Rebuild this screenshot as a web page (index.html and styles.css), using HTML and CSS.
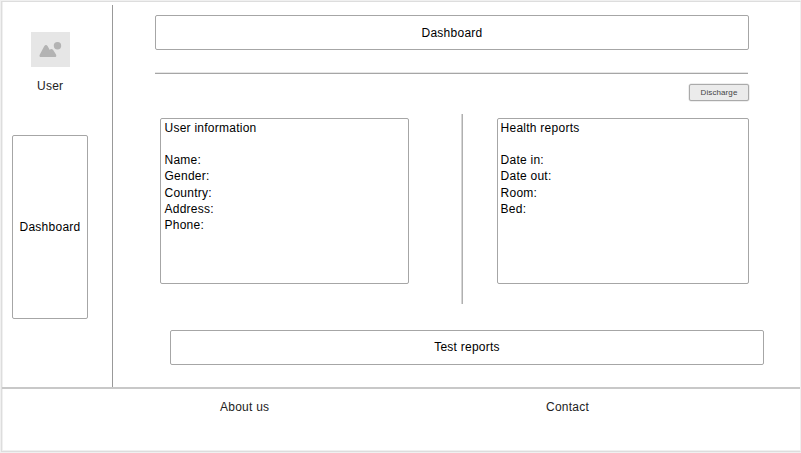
FILE: index.html
```html
<!DOCTYPE html>
<html lang="en">
<head>
<meta charset="utf-8">
<title>Dashboard</title>
<link rel="stylesheet" href="styles.css">
</head>
<body>
<div class="frame">
  <div class="body">
    <aside class="sidebar">
      <svg class="avatar" width="39" height="35" viewBox="0 0 39 35">
        <rect width="39" height="35" fill="#e6e6e6"/>
        <path d="M8.7 22.7L13.2 14.3Q15 11.9 16.7 14.3L18.8 18L19.4 17.3Q20.7 16.4 22 17.8L25 22.5Q26 25 23.6 25.1H10.2Q7.8 25 8.7 22.7Z" fill="#b3b3b3"/>
        <circle cx="26.5" cy="13.8" r="3.7" fill="#b3b3b3"/>
      </svg>
      <div class="user">User</div>
      <nav class="box nav">Dashboard</nav>
    </aside>
    <main class="main">
      <header class="box title">Dashboard</header>
      <hr class="rule">
      <button class="discharge" type="button">Discharge</button>
      <div class="panels">
        <section class="box panel panel-user">
          <h2>User information</h2>
          <p>Name:</p><p>Gender:</p><p>Country:</p><p>Address:</p><p>Phone:</p>
        </section>
        <div class="divider"></div>
        <section class="box panel panel-health">
          <h2>Health reports</h2>
          <p>Date in:</p><p>Date out:</p><p>Room:</p><p>Bed:</p>
        </section>
      </div>
      <div class="box tests">Test reports</div>
    </main>
  </div>
  <footer class="footer"><span class="about">About us</span><span>Contact</span></footer>
</div>
</body>
</html>
```
FILE: styles.css
```css
* { box-sizing: border-box; }
body {
  margin: 0;
  height: 453px;
  padding: 1px 0 1px 1px;
  overflow: hidden;
  background: #f0f0f0;
  color: #000;
  font: 12px/16px "Liberation Sans", Arial, sans-serif;
  letter-spacing: 0.25px;
}
.frame {
  height: 451px;
  border: 1px solid #ddd;
  border-right-color: #f0f0f0;
  background: #fff;
  box-shadow: inset 1px 0 #f0f0f0, inset 0 -1px #f0f0f0;
}
.body { display: flex; height: 385px; padding-top: 3px; }
.box {
  display: flex;
  align-items: center;
  justify-content: center;
  border: 1px solid #a6a6a6;
  border-radius: 2px;
  background: #fff;
}
.sidebar {
  width: 111px;
  border-right: 1px solid #999;
  padding: 27px 0 0 10px;
}
.avatar { display: block; margin-left: 19px; }
.user { margin: 11px 0 0 25px; color: #222; }
.nav { width: 76px; height: 184px; margin-top: 41px; }
.main { padding: 10px 0 0 42px; }
.title { width: 594px; height: 35px; }
.rule {
  width: 593px;
  height: 2px;
  margin: 22px 0 10px;
  border: 0;
  background: linear-gradient(#e6e6e6 50%, #a6a6a6 50%);
}
.discharge {
  display: block;
  width: 60px;
  height: 17px;
  margin-left: 534px;
  padding: 0;
  border: 1px solid #aaa;
  border-radius: 2px;
  box-shadow: 0 0 0 0.5px #ddd;
  background: #ebebeb;
  color: #444;
  font: 8px/15px "Liberation Sans", Arial, sans-serif;
  letter-spacing: 0.1px;
}
.panels { display: flex; margin: 13px 0 0 5px; }
.panel {
  display: block;
  height: 166px;
  margin-top: 4px;
  padding: 1px 3px;
}
.panel-user { width: 249px; padding-left: 3.5px; }
.panel-health { width: 252px; padding-left: 2.6px; }
.panel h2 { margin: 0 0 16px; font: inherit; }
.panel p { margin: 0; line-height: 16.25px; }
.divider {
  width: 2px;
  height: 190px;
  margin: 0 34px 0 52px;
  background: linear-gradient(90deg, #d6d6d6 50%, #b0b0b0 50%);
}
.tests {
  width: 594px;
  height: 35px;
  margin: 26px 0 0 15px;
  padding-bottom: 2px;
}
.footer {
  display: flex;
  height: 64px;
  border-top: 2px solid #c8c8c8;
  padding: 10px 0 0 218px;
  color: #222;
}
.about { width: 326px; }
```
